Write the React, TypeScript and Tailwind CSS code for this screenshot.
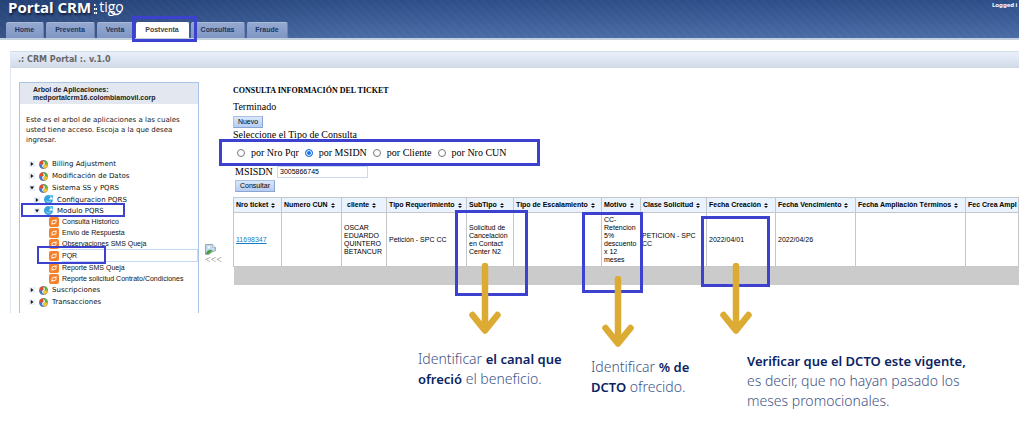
import React from "react";

const tabs = [
  { label: "Home", width: "w-[38px]" },
  { label: "Preventa", width: "w-[49px]" },
  { label: "Venta", width: "w-[37px]" },
  { label: "Postventa", width: "w-[53px]", active: true },
  { label: "Consultas", width: "w-[54px]" },
  { label: "Fraude", width: "w-[41px]" },
];

type Node = { label: string; level: 0 | 1 | 2; open?: boolean; selected?: boolean };

const tree: Node[] = [
  { label: "Billing Adjustment", level: 0 },
  { label: "Modificación de Datos", level: 0 },
  { label: "Sistema SS y PQRS", level: 0, open: true },
  { label: "Configuracion PQRS", level: 1 },
  { label: "Modulo PQRS", level: 1, open: true },
  { label: "Consulta Historico", level: 2 },
  { label: "Envio de Respuesta", level: 2 },
  { label: "Observaciones SMS Queja", level: 2 },
  { label: "PQR", level: 2, selected: true },
  { label: "Reporte SMS Queja", level: 2 },
  { label: "Reporte solicitud Contrato/Condiciones", level: 2 },
  { label: "Suscripciones", level: 0 },
  { label: "Transacciones", level: 0 },
];

const columns = [
  { title: "Nro ticket", width: "w-[48px]", value: "11698347" },
  { title: "Numero CUN", width: "w-[60px]", value: "" },
  { title: "cliente", width: "w-[45px]", value: "OSCAR EDUARDO QUINTERO BETANCUR" },
  { title: "Tipo Requerimiento", width: "w-[80px]", value: "Petición - SPC CC" },
  { title: "SubTipo", width: "w-[47px]", value: "Solicitud de Cancelación en Contact Center N2" },
  { title: "Tipo de Escalamiento", width: "w-[88px]", value: "" },
  { title: "Motivo", width: "w-[39px]", value: "CC-Retencion 5% descuento x 12 meses" },
  { title: "Clase Solicitud", width: "w-[66px]", value: "PETICION - SPC CC" },
  { title: "Fecha Creación", width: "w-[69px]", value: "2022/04/01" },
  { title: "Fecha Vencimiento", width: "w-[80px]", value: "2022/04/26" },
  { title: "Fecha Ampliación Términos", width: "w-[110px]", value: "" },
  { title: "Fec Crea Ampl", width: "w-auto", value: "" },
];

const options = ["por Nro Pqr", "por MSIDN", "por Cliente", "por Nro CUN"];

const frames = [
  "left-[132px] top-[16px] w-[65px] h-[26px] border-3",
  "left-[21px] top-[203px] w-[104px] h-[14px] border-2",
  "left-[37px] top-[246px] w-[69px] h-[18px] border-2",
  "left-[219px] top-[139px] w-[321px] h-[27px] border-3",
  "left-[455px] top-[210px] w-[73px] h-[86px] border-3",
  "left-[582px] top-[212px] w-[61px] h-[81px] border-3",
  "left-[701px] top-[216px] w-[69px] h-[71px] border-3",
];

const arrows = ["left-[468px] top-[263px]", "left-[601px] top-[276px]", "left-[719px] top-[263px]"];

function Pinwheel() {
  return (
    <svg viewBox="0 0 16 16" className="size-[9px] shrink-0" aria-hidden="true">
      <circle cx="8" cy="8" r="8" fill="#85888e" />
      <path d="M8 8V1A7 7 0 0 0 1 8Z" fill="#e5482c" />
      <path d="M8 8H15A7 7 0 0 0 8 1Z" fill="#54b435" />
      <path d="M8 8V15A7 7 0 0 0 15 8Z" fill="#f6c52b" />
      <path d="M8 8H1A7 7 0 0 0 8 15Z" fill="#3a78d8" />
      <path d="M8 3Q11 6 8 8Q5 10 8 13" fill="none" stroke="#fff" strokeWidth="2" />
    </svg>
  );
}

function BlueSwirl() {
  return (
    <svg viewBox="0 0 16 16" className="size-[9px] shrink-0" aria-hidden="true">
      <path d="M8 0A8 8 0 1 0 16 8H8L12 4.500A5 5 0 0 0 8 0Z" fill="#35a3e0" />
      <path d="M9 0H16V7Z" fill="#5fc0f0" />
      <path d="M12 10.500A5 5 0 0 1 4 10" fill="none" stroke="#c4e8fa" strokeWidth="1.500" />
    </svg>
  );
}

function LeafIcon() {
  return (
    <svg viewBox="0 0 20 20" className="size-[10px] shrink-0" aria-hidden="true">
      <rect width="20" height="20" rx="4" fill="#f5812a" />
      <path d="M5.500 11Q6 6.500 10 6.500H14M14.500 9Q14 13.500 10 13.500H6" fill="none" stroke="#fff" strokeWidth="1.800" />
      <path d="M15 4V8.500H11ZM5 16V11.500H9Z" fill="#fff" />
    </svg>
  );
}

function Twisty({ open }: { open?: boolean }) {
  return (
    <svg viewBox="0 0 6 6" className="size-[6px] shrink-0" aria-hidden="true">
      <rect width="6" height="6" fill="#e9f1fb" />
      <path d={open ? "M1 1.500H5L3 4.500Z" : "M1.800 1L4.500 3L1.800 5Z"} fill="#111" />
    </svg>
  );
}

function TreeRow({ label, level, open, selected }: Node) {
  if (level === 2) {
    return (
      <li className={"flex items-center pl-[29px] " + (selected ? "h-[13px]" : "h-[11px]")}>
        <LeafIcon />
        <a
          href="#"
          className={
            "ml-[3px] flex-1 border-y border-r whitespace-nowrap font-['Liberation_Sans',Arial,sans-serif] text-[7px] text-[#111] " +
            (selected ? "border-[#c3d9f5] leading-[11px]" : "border-transparent leading-[9px]")
          }
        >
          {label}
        </a>
      </li>
    );
  }
  return (
    <li className={"flex items-center " + (level === 0 ? "h-[12px] pl-[9px]" : "h-[11px] pl-[14px]")}>
      <Twisty open={open} />
      <span className="w-[4px]" />
      {level === 0 ? <Pinwheel /> : <BlueSwirl />}
      <a href="#" className="ml-[4px] whitespace-nowrap text-[7px] leading-[12px] text-[#111]">
        {label}
      </a>
    </li>
  );
}

function SortMark() {
  return (
    <svg viewBox="0 0 4 5" className="ml-[3px] inline-block h-[5px] w-[4px]" aria-hidden="true">
      <path d="M0 2L2 0L4 2ZM0 3L2 5L4 3Z" fill="#111" />
    </svg>
  );
}

const buttonStyle =
  "block h-[12px] border border-[#a9c1e4] border-r-[#8aa5cf] border-b-[#8aa5cf] bg-linear-to-b from-[#d9e7fb] to-[#b4cdf2] text-center font-['Liberation_Sans',Arial,sans-serif] text-[7px] leading-[10px] text-black";

export default function App() {
  return (
    <div className="relative min-h-screen overflow-hidden bg-white font-['DejaVu_Sans',Verdana,sans-serif] text-[#222]">
      <header className="border-b-2 border-[#c3d0de] bg-[repeating-linear-gradient(45deg,rgba(255,255,255,0.02)_0px,rgba(255,255,255,0.02)_3px,transparent_3px,transparent_6px),linear-gradient(90deg,rgba(20,40,80,0.35),transparent_35%),linear-gradient(180deg,#2c4d87,#4a6ba5)]">
        <div className="flex h-[22px] justify-between">
          <div className="flex pl-[8px] font-['Open_Sans','Noto_Sans',sans-serif] text-white">
            <h1 className="text-[15px] leading-[15px] font-bold whitespace-nowrap [text-shadow:1px_2px_2px_#101c38]">
              Portal CRM
            </h1>
            <span className="ml-[3px] flex items-start">
              <svg viewBox="0 0 3 10" className="mt-[4px] h-[10px] w-[3px]" aria-hidden="true">
                <path d="M0 0h1.500v2H0zM0 4h1.500v2H0zM0 8h1.500v2H0zM2 4h1v2H2zM2 8h1v2H2z" fill="#fff" />
              </svg>
              <span className="relative ml-[2px] text-[14px] leading-[13px]">
                tigo
                <svg viewBox="0 0 12 5" className="absolute top-[11px] left-[11px] h-[5px] w-[12px]" aria-hidden="true">
                  <path d="M1 1Q6 6 11 1" fill="none" stroke="#fff" strokeWidth="1.500" />
                </svg>
              </span>
            </span>
          </div>
          <p className="w-[27px] overflow-hidden font-['Noto_Sans',sans-serif] text-[6px] leading-[10px] font-bold whitespace-nowrap text-white">
            Logged i
          </p>
        </div>
        <nav className="flex h-[16px] gap-[2px] pl-[6px] font-['Liberation_Sans',Arial,sans-serif] text-[7px] leading-[14px] font-bold">
          {tabs.map((t) => (
            <a
              key={t.label}
              href="#"
              className={
                "rounded-t-xs border-t border-r text-center " +
                t.width +
                (t.active
                  ? " border-white bg-white text-[#444]"
                  : " border-t-[#a9b9d8] border-r-[#6d83b1] bg-linear-to-b from-[#94a8cf] to-[#8096c3] text-[#1c3562]")
              }
            >
              {t.label}
            </a>
          ))}
        </nav>
      </header>

      <section className="mt-[11px] ml-[10px] border-l border-[#dde6ee]">
        <h2 className="h-[17px] border-t border-b border-t-[#cfe0e6] border-b-[#cdd9e6] bg-linear-to-b from-[#e9f0fb] to-[#d3dbe9] pl-[7px] text-[8px] leading-[15px] font-bold whitespace-nowrap text-[#666]">
          .: CRM Portal :. v.1.0
        </h2>
        <div className="flex items-start">
          <aside className="mt-[14px] ml-[8px] w-[180px] shrink-0 border border-b-0 border-[#a9c4e4] pb-[5px]">
            <h3 className="h-[21px] bg-[#e3e8f0] pt-[3px] pl-[13px] font-['Liberation_Sans',Arial,sans-serif] text-[7px] leading-[8px] font-bold text-[#222]">
              Arbol de Aplicaciones:
              <br />
              medportalcrm16.colombiamovil.corp
            </h3>
            <p className="mt-[11px] pl-[6px] text-[7px] leading-[10px] whitespace-nowrap">
              Este es el arbol de aplicaciones a las cuales
              <br />
              usted tiene acceso. Escoja a la que desea
              <br />
              ingresar.
            </p>
            <ul className="mt-[13px]">
              {tree.map((n) => (
                <TreeRow key={n.label} {...n} />
              ))}
            </ul>
          </aside>

          <button type="button" className="mt-[176px] ml-[6px] w-[18px] shrink-0 text-left font-['Liberation_Serif',serif] text-[10px] leading-[9px] text-[#777]">
            <svg viewBox="0 0 20 20" className="block size-[11px]" aria-hidden="true">
              <path d="M1 1H14L19 6V12L12 15L7 19H1Z" fill="#c5dcf5" stroke="#8b939c" strokeWidth="1.500" />
              <path d="M14 1V6H19" fill="#fff" stroke="#8b939c" />
              <path d="M2 16Q6 8 14 12L7 18H2Z" fill="#48a33c" />
              <circle cx="7" cy="6" r="2" fill="#fff" />
            </svg>
            &lt;&lt;&lt;
          </button>

          <main className="ml-[10px] min-w-0 flex-1 pt-[16px] font-['Liberation_Serif','Times_New_Roman',serif] text-[10px] leading-[14px] text-black">
            <h3 className="text-[8px] leading-[14px] font-bold">CONSULTA INFORMACIÓN DEL TICKET</h3>
            <p className="mt-[2px]">Terminado</p>
            <button type="button" className={buttonStyle + " mt-[2px] w-[30px]"}>
              Nuevo
            </button>
            <fieldset>
              <legend className="h-[14px]">Seleccione el Tipo de Consulta</legend>
              <div className="mt-[3px] flex h-[15px] gap-[6px] pl-[4px]">
                {options.map((o, i) => (
                  <label key={o} className="flex items-center gap-[6px] whitespace-nowrap">
                    <input
                      type="radio"
                      name="tipo"
                      defaultChecked={i === 1}
                      className="size-[8px] appearance-none rounded-full border border-[#777] bg-white checked:border-[#1a73e8] checked:bg-[#1a73e8] checked:shadow-[inset_0_0_0_1px_#fff]"
                    />
                    {o}
                  </label>
                ))}
              </div>
            </fieldset>
            <div className="mt-[5px] flex h-[13px] items-center pl-[2px]">
              <label htmlFor="msisdn" className="w-[40px]">
                MSISDN
              </label>
              <input
                id="msisdn"
                defaultValue="3005866745"
                className="ml-[2px] h-[12px] w-[91px] border border-[#c9d9ee] pl-[2px] font-['Liberation_Sans',Arial,sans-serif] text-[7px] text-black"
              />
            </div>
            <button type="button" className={buttonStyle + " mt-[2px] ml-[2px] w-[40px]"}>
              Consultar
            </button>
            <div className="mt-[5px] overflow-hidden font-['Liberation_Sans',Arial,sans-serif] text-[7px] leading-[8px]">
              <table className="w-full table-fixed border-collapse">
                <thead>
                  <tr className="h-[15px] bg-[#eaf3fd]">
                    {columns.map((c) => (
                      <th
                        key={c.title}
                        className={"border border-[#c4c8cc] text-left font-bold whitespace-nowrap " + (c.title === "cliente" ? "pl-[5px] " : "pl-[2px] ") + c.width}
                      >
                        {c.title}
                        {c.title !== "Fec Crea Ampl" && <SortMark />}
                      </th>
                    ))}
                  </tr>
                </thead>
                <tbody>
                  <tr className="h-[54px]">
                    {columns.map((c, i) => (
                      <td key={c.title} className={"border border-[#c4c8cc] " + (i === 7 ? "pl-[1px]" : i === 6 ? "px-[2px]" : "pl-[2px]")}>
                        {i === 0 ? (
                          <a href="#" className="text-[#1a7cc0] underline">
                            {c.value}
                          </a>
                        ) : (
                          c.value
                        )}
                      </td>
                    ))}
                  </tr>
                </tbody>
                <tfoot>
                  <tr className="h-[18px] bg-[#cbcbcb]">
                    <td colSpan={12} />
                  </tr>
                </tfoot>
              </table>
            </div>
          </main>
        </div>
      </section>

      <div className="flex items-start pt-[36px] pl-[418px] font-['Noto_Sans',sans-serif] text-[14px] leading-[20px] font-light whitespace-nowrap text-[#3f5488] [&_b]:text-[13px] [&_b]:font-semibold [&_b]:text-[#0b2363]">
        <p className="w-[173px]">
          Identificar <b>el canal que</b>
          <br />
          <b>ofreció</b> el beneficio.
        </p>
        <p className="mt-[8px] w-[156px]">
          Identificar <b>% de</b>
          <br />
          <b>DCTO</b> ofrecido.
        </p>
        <p className="mt-[2px]">
          <b>Verificar que el DCTO este vigente,</b>
          <br />
          es decir, que no hayan pasado los
          <br />
          meses promocionales.
        </p>
      </div>

      {frames.map((f) => (
        <div key={f} className={"pointer-events-none absolute border-[#3c42cf] " + f} />
      ))}
      {arrows.map((a) => (
        <svg key={a} viewBox="0 0 34 72" className={"pointer-events-none absolute h-[72px] w-[34px] " + a} aria-hidden="true">
          <path d="M17 3V66M4.500 52L17 67.500L29.500 52" fill="none" stroke="#dcab33" strokeWidth="6.500" strokeLinecap="round" strokeLinejoin="round" />
        </svg>
      ))}
    </div>
  );
}
